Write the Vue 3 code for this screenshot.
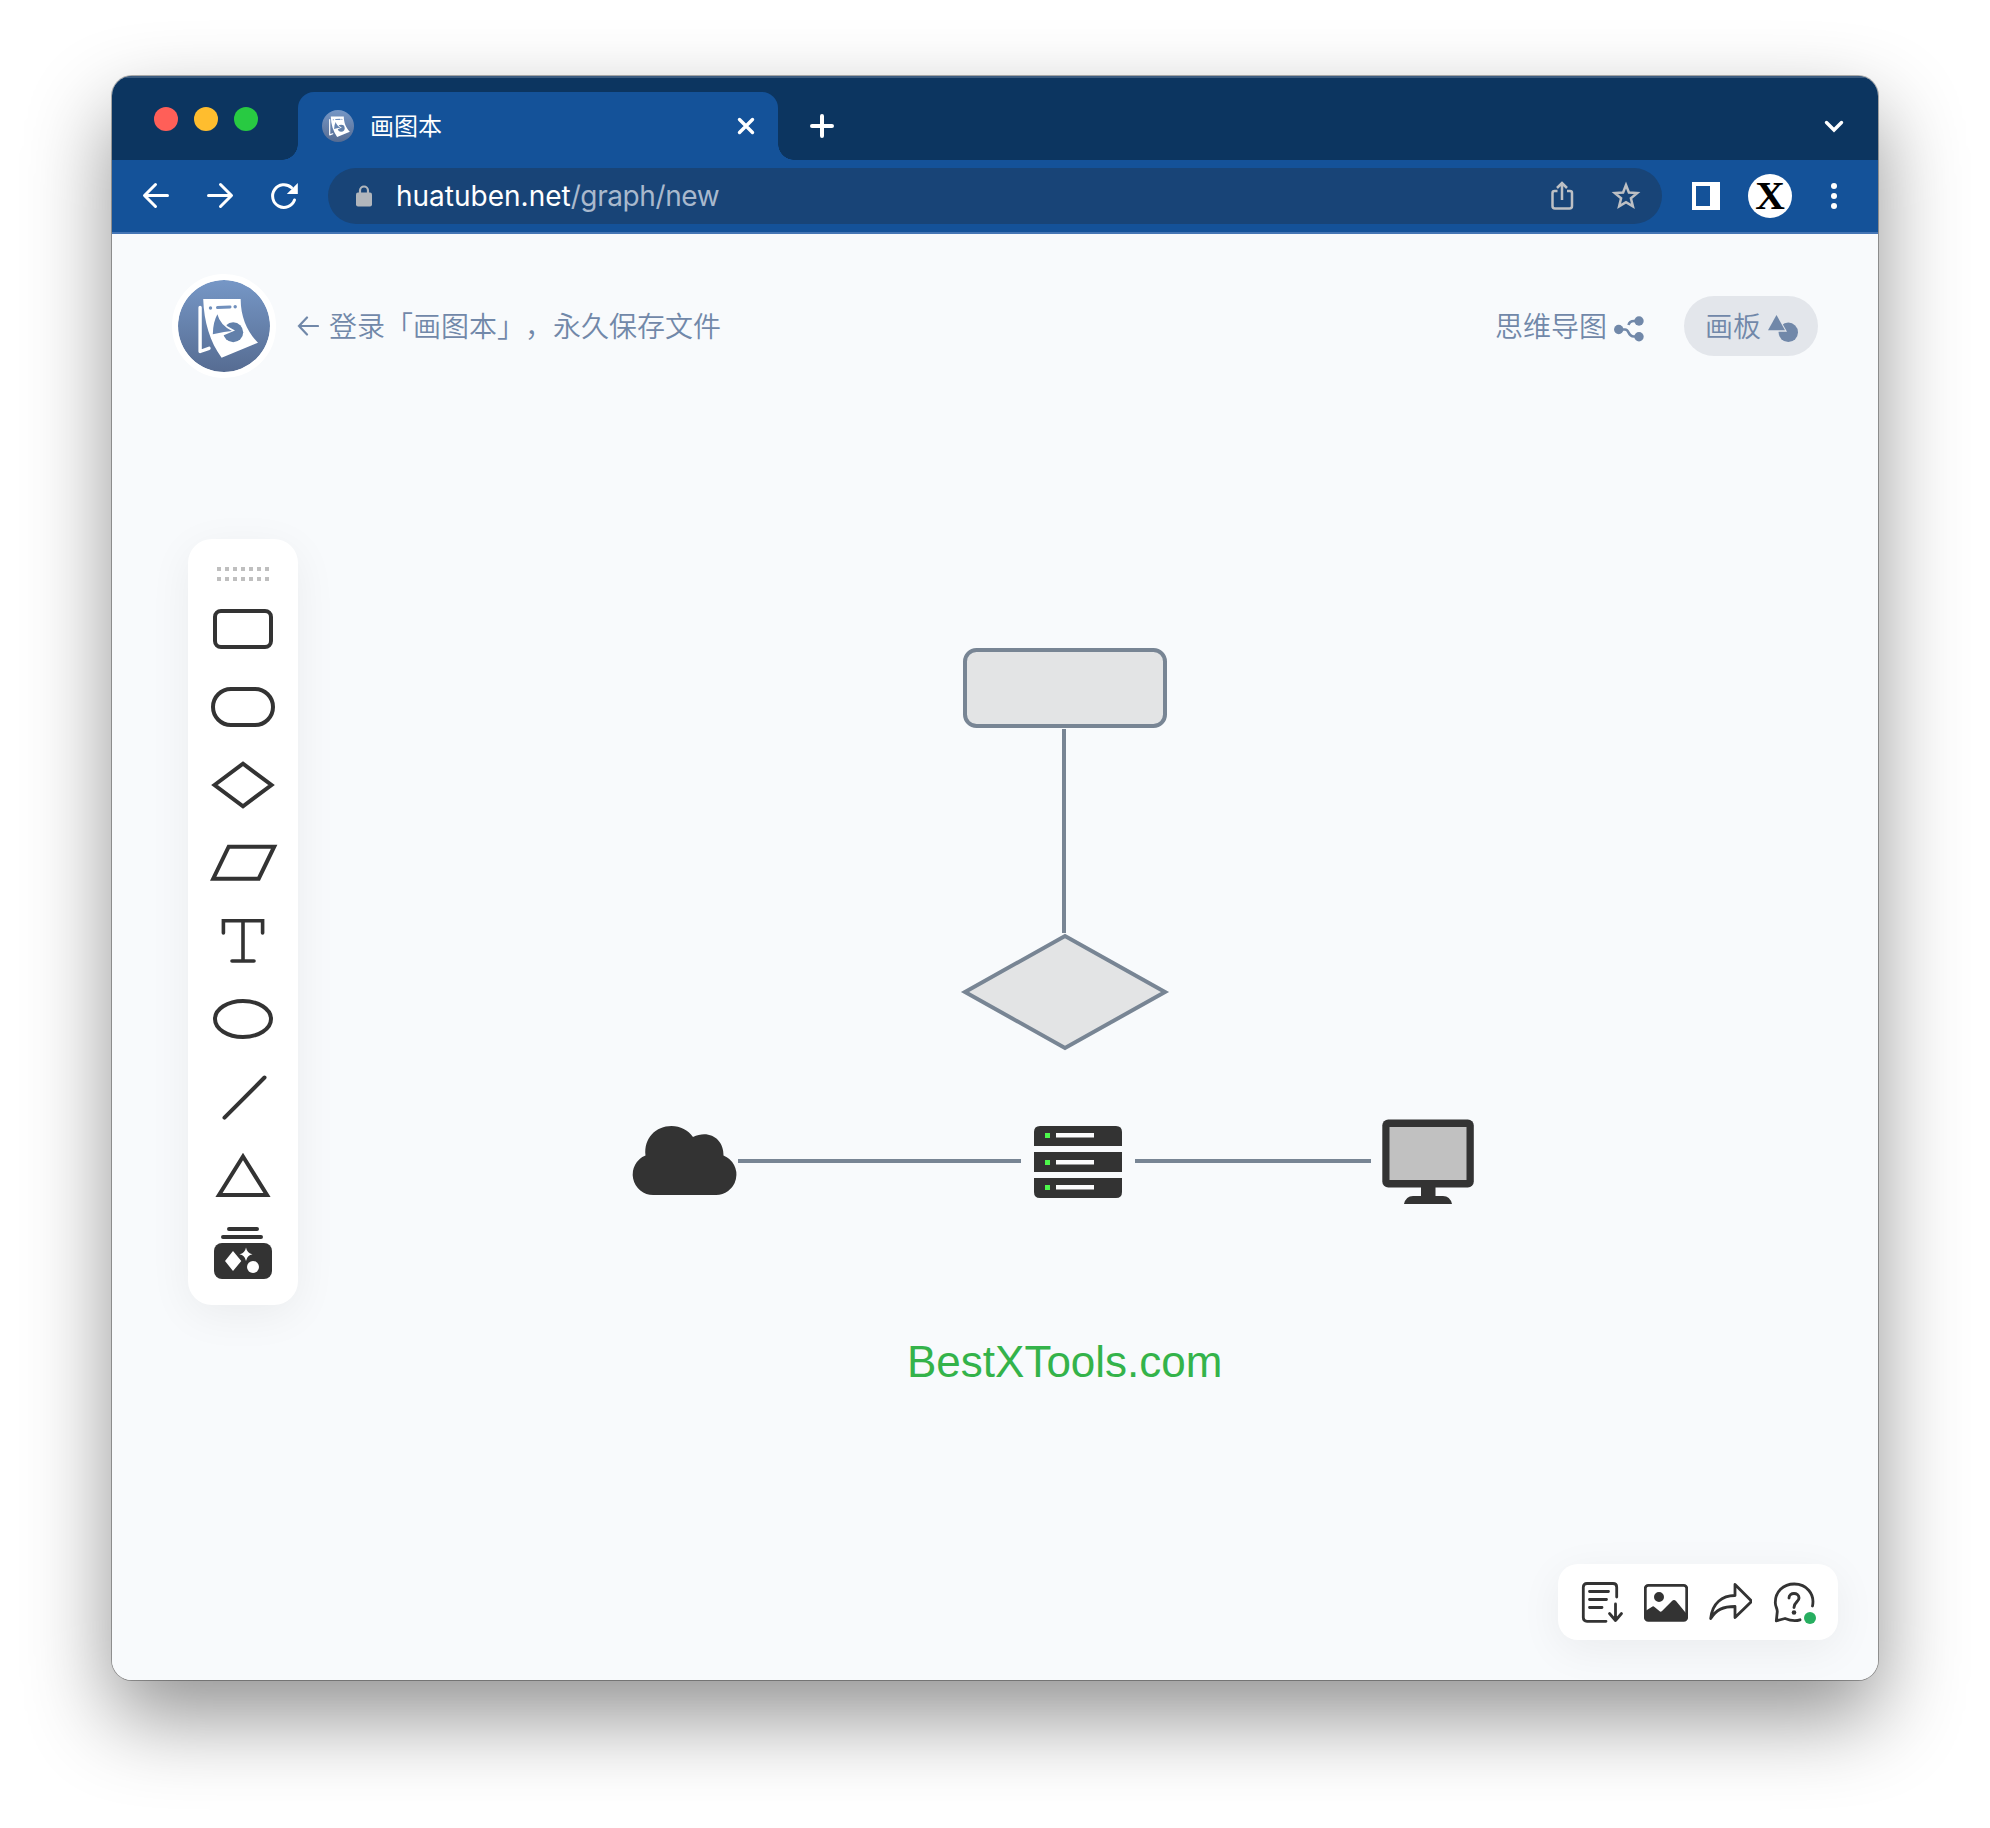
<script setup>
const tools = [
  { name: 'rect', body: '<rect x="27" y="21" width="56" height="36" rx="6"/>' },
  { name: 'round', body: '<rect x="25" y="21" width="60" height="36" rx="18"/>' },
  { name: 'diamond', body: '<path d="M26.5 39 55 17.7 83.500 39 55 60.300Z"/>' },
  { name: 'parallelogram', body: '<path d="M40.700 22.700H86.200L70.700 54.700H25.200Z"/>' },
  { name: 'text', body: '<g stroke-linecap="round"><path d="M35.400 31V18.700H74.600V31" stroke-width="3.600"/><path d="M55 19V59M44 59H66" stroke-width="3.600"/></g>' },
  { name: 'ellipse', body: '<ellipse cx="55" cy="39" rx="28" ry="18"/>' },
  { name: 'line', body: '<path d="M36.500 59.700 76.500 19.500" stroke-linecap="round"/>' },
  { name: 'triangle', body: '<path d="M55 20.500 79 59H31Z"/>' },
  {
    name: 'shapes',
    body:
      '<path d="M41 15H69M35 23H73" stroke-linecap="round"/>' +
      '<rect x="26" y="29" width="58" height="36" rx="8" fill="#333" stroke="none"/>' +
      '<path d="M45 37 53.300 47 45 57 37 47ZM58 33.500Q59 39.200 64.500 40.200 59 41.200 58 47 57 41.200 51.500 40.200 57 39.200 58 33.500Z" fill="#fff" stroke="none"/>' +
      '<circle cx="65" cy="53" r="6" fill="#fff" stroke="none"/>',
  },
]
const dots = Array.from({ length: 14 }, (_, i) => ({ x: (i % 7) * 8, y: i < 7 ? 0 : 10 }))
const servers = [{ y: 1126, m: 1133 }, { y: 1152, m: 1160 }, { y: 1178, m: 1185 }]
</script>

<template>
  <div class="desktop">
    <svg class="defs" width="0" height="0">
      <linearGradient id="logoFill" x1="0" y1="0" x2="0" y2="1">
        <stop offset="0" stop-color="#7697c6" />
        <stop offset="1" stop-color="#566c92" />
      </linearGradient>
      <symbol id="logo" viewBox="0 0 92 92">
        <circle cx="46" cy="46" r="46" fill="url(#logoFill)" />
        <path d="M22.100 27.500V71.500L31 68.300" fill="none" stroke="#fff" stroke-width="3.400" stroke-linecap="round" stroke-linejoin="round" />
        <path d="M25.200 19H62.700C62.500 36 69 52 80 62.700L43.600 77.700C32 62 26 42 25.200 19Z" fill="#fff" />
        <circle cx="32.500" cy="28" r="1.700" fill="#7190bd" />
        <circle cx="57.200" cy="26.700" r="1.700" fill="#7190bd" />
        <path d="M39.500 27.600 52 26.900" stroke="#7190bd" stroke-width="3" stroke-linecap="round" />
        <circle cx="55.200" cy="52.300" r="10" fill="#6280aa" />
        <path d="M39 31 49 46 57 50.500 44 56Z" fill="#fff" />
        <path d="M39.400 34.300Q42 45 54 51L46 52 34.800 54.300Q35 42 39.400 34.300Z" fill="#6684b0" />
      </symbol>
    </svg>

    <div class="window">
      <div class="tabstrip">
        <div class="lights"><i class="red"></i><i class="yellow"></i><i class="green"></i></div>
        <div class="tab">
          <svg class="favicon"><use href="#logo" /></svg>
          <span class="tab-title">画图本</span>
          <svg class="close" width="20" height="20" viewBox="0 0 20 20"><path d="M3.500 3.500 16.500 16.500M16.500 3.500 3.500 16.500" /></svg>
        </div>
        <svg class="plus" width="28" height="28" viewBox="0 0 28 28"><path d="M14 4V24M4 14H24" /></svg>
        <svg class="chevron" width="24" height="24" viewBox="0 0 24 24"><path d="M4.500 8.500 12 16 19.500 8.500" /></svg>
      </div>

      <div class="navbar">
        <svg class="nav-icon" width="32" height="32" viewBox="0 0 32 32"><path d="M27.500 15.500H5M15.500 4.500 4.500 15.500 15.500 26.500" /></svg>
        <svg class="nav-icon" width="32" height="32" viewBox="0 0 32 32"><path d="M4.500 15.500H27M16.500 4.500 27.500 15.500 16.500 26.500" /></svg>
        <svg class="nav-icon" width="32" height="32" viewBox="0 0 32 32">
          <path d="M26.500 20A11.300 11.300 0 1 1 23.500 7.700" /><path class="solid" d="M29.800 3V14H18.800Z" />
        </svg>
        <div class="address">
          <svg class="lock" width="16" height="22" viewBox="0 0 16 22">
            <path d="M4 9V5.500a4 4 0 0 1 8 0V9" fill="none" stroke="#b1b6bc" stroke-width="2.200" />
            <rect y="7.500" width="16" height="14" rx="2" fill="#b1b6bc" />
          </svg>
          <span class="url">huatuben.net<span class="path">/graph/new</span></span>
          <svg class="share" width="24" height="32" viewBox="0 0 24 32"><path d="M7.500 11H4.500Q2.500 11 2.500 13V26Q2.500 28.500 5 28.500H19.500Q22 28.500 22 26V13Q22 11 20 11H17M12 20V3.500M7 8 12 3 17 8" /></svg>
          <svg class="star" width="30" height="30" viewBox="0 0 30 30"><path d="M15 4 17.900 11.500 26.200 12.100 19.900 17.300 21.900 25.400 15 21.100 8.100 25.400 10.100 17.300 3.800 12.100 12.100 11.500Z" /></svg>
        </div>
        <svg class="panel-icon" width="28" height="28" viewBox="0 0 28 28"><path d="M0 0H28V28H0ZM4 4V24H18V4Z" fill="#fff" fill-rule="evenodd" /></svg>
        <div class="profile">X</div>
        <svg class="menu" width="6" height="28" viewBox="0 0 6 28" fill="#fff"><circle cx="3" cy="4" r="3" /><circle cx="3" cy="14" r="3" /><circle cx="3" cy="24" r="3" /></svg>
      </div>

      <div class="page">
        <svg class="board" width="1766" height="1446" viewBox="112 234 1766 1446">
          <g fill="#e3e4e5" stroke="#788594" stroke-width="4">
            <path d="M1064 729V933M738 1161H1021M1135 1161H1371" />
            <rect x="965" y="650" width="200" height="76" rx="11.500" />
            <path d="M965 992 1065 936 1165 992 1065 1048Z" />
          </g>
          <path fill="#333" d="M653.500 1195A20.500 20.500 0 0 1 645.500 1155.500C643.500 1138 656 1126 671.500 1126 680.500 1126 688 1130 693 1137 709 1129 724 1139 723.500 1155.500A20.500 20.500 0 0 1 714.500 1195Z" />
          <path fill="#333" d="M1034 1146V1132Q1034 1126 1040 1126H1116Q1122 1126 1122 1132V1146ZM1034 1152H1122V1172H1034ZM1034 1178H1122V1192Q1122 1198 1116 1198H1040Q1034 1198 1034 1192Z" />
          <g v-for="s in servers" :key="s.y">
            <rect x="1045" :y="s.m" width="5" height="5" fill="#4df84c" />
            <rect x="1056" :y="s.m" width="38" height="4.500" fill="#fbfbfd" />
          </g>
          <rect x="1382.300" y="1119.500" width="91.500" height="68" rx="6" fill="#333" />
          <rect x="1389.500" y="1127" width="77" height="53" fill="#c1c1c1" />
          <path fill="#333" d="M1421 1187H1435.500V1196H1443Q1450 1196 1452 1204H1404Q1406 1196 1413 1196H1421Z" />
          <text class="caption" x="907" y="1377">BestXTools.com</text>
        </svg>

        <header class="header">
          <svg class="logo"><use href="#logo" /></svg>
          <div class="login"><svg width="22" height="20" viewBox="0 0 22 20"><path d="M21 10H2M10 1.500 2 10 10 18.500" /></svg><span class="label">登录「画图本」，永久保存文件</span></div>
          <div class="mode">
            <span class="label">思维导图</span>
            <svg width="30" height="26" viewBox="0 0 30 26">
              <path d="M5 13.500H11C16 13.500 13 20.500 20 20.500H25M14.500 9Q15.500 5 20 5H25" fill="none" stroke="#7188a9" stroke-width="2.600" />
              <circle cx="4.700" cy="13.500" r="4.700" /><circle cx="25" cy="5" r="4.700" /><circle cx="25" cy="20.700" r="4.700" />
            </svg>
          </div>
          <div class="mode active">
            <span class="label">画板</span>
            <svg width="30" height="28" viewBox="0 0 30 28">
              <circle cx="20.300" cy="17.300" r="9.700" /><path d="M8.500-2 19 16.800H6L0 16Z" fill="#e3e6eb" /><path d="M8.500 0 17 15.300H0Z" />
            </svg>
          </div>
        </header>

        <aside class="toolbox">
          <svg class="grip" width="52" height="14" viewBox="0 0 52 14" fill="#bfbfbf"><rect v-for="d in dots" :key="`${d.x}-${d.y}`" :x="d.x" :y="d.y" width="4" height="4" /></svg>
          <svg v-for="t in tools" :key="t.name" class="tool" width="110" height="78" viewBox="0 0 110 78" v-html="t.body"></svg>
        </aside>

        <footer class="actions">
          <svg width="44" height="44" viewBox="0 0 44 44"><path d="M26 41.300H7Q3.300 41.300 3.300 37.600V7.200Q3.300 3.500 7 3.500H33Q36.700 3.500 36.700 7.200V17M9.500 11.500H28.500M9.500 19.500H26.500M9.500 27.500H22M35.500 24V40M29.500 33.500 35.500 40.500 41.500 33.500" /></svg>
          <svg width="44" height="44" viewBox="0 0 44 44"><rect x="1.300" y="5.300" width="41.400" height="35" rx="3" /><circle cx="15" cy="17" r="3.600" class="dark" /><path class="dark" d="M1.300 31 8.500 26.500Q9.500 26 10.500 27L16 31.500Q17 32 18 31L28 21Q30 19 32 21L42.700 34V38Q42.700 40.300 40 40.300H4Q1.300 40.300 1.300 38Z" stroke="none" /></svg>
          <svg width="44" height="44" viewBox="0 0 44 44"><path d="M2.700 38.500C4.200 23 14.200 15.500 27 15.500V4.500L43.700 21.300 27 37.500V26.500C15.200 26.500 8.200 29.500 2.700 38.500Z" /></svg>
          <svg width="44" height="44" viewBox="0 0 44 44">
            <path d="M40.500 26C43 14 34.500 4 22.300 4 11 4 3.300 12 3.300 22.500 3.300 27 5.300 28 5.300 31.500L4.300 40.800 13 38.500C18 40.500 23 41.500 28 39.800" />
            <path d="M17 18C17 12 27 12 27 18 27 22 22 22 22 27.500" stroke-width="2.900" /><circle cx="22" cy="32.500" r="2.300" class="dark" stroke="none" /><circle cx="38" cy="38" r="6" fill="#27ae60" stroke="none" />
          </svg>
        </footer>
      </div>
    </div>
  </div>
</template>

<style>
body {
  background: #fff;
}
</style>

<style scoped>
.desktop {
  box-sizing: border-box;
  width: 1990px;
  height: 1828px;
  padding: 76px 112px 148px;
  overflow: hidden;
  font-family: Inter, 'Noto Sans CJK SC', sans-serif;
}
.defs {
  position: absolute;
}
svg {
  display: block;
  flex: none;
}
.window {
  display: flex;
  flex-direction: column;
  height: 1604px;
  border-radius: 20px;
  overflow: hidden;
  box-shadow: 0 0 0 1px rgba(0, 0, 0, 0.3), 0 37px 84px rgba(0, 0, 0, 0.43);
}
.tabstrip {
  display: flex;
  align-items: center;
  box-sizing: border-box;
  height: 84px;
  padding: 16px 32px 0 42px;
  background: #0c3560;
  box-shadow: inset 0 2px #3b5c80;
}
.lights {
  display: flex;
  gap: 16px;
  width: 144px;
  margin-bottom: 14px;
}
.lights i {
  width: 24px;
  height: 24px;
  border-radius: 50%;
}
.red { background: #ff5f58; }
.yellow { background: #ffbd2e; }
.green { background: #28ca42; }
.tab {
  position: relative;
  display: flex;
  align-items: center;
  box-sizing: border-box;
  width: 480px;
  height: 68px;
  padding: 0 22px 0 24px;
  border-radius: 16px 16px 0 0;
  background: #145299;
  color: #fff;
}
.tab::before,
.tab::after {
  content: '';
  position: absolute;
  bottom: 0;
  width: 16px;
  height: 16px;
}
.tab::before {
  left: -16px;
  background: radial-gradient(circle at 0 0, transparent 15.500px, #145299 16px);
}
.tab::after {
  right: -16px;
  background: radial-gradient(circle at 100% 0, transparent 15.500px, #145299 16px);
}
.favicon {
  width: 32px;
  height: 32px;
}
.tab-title {
  flex: 1;
  margin: 0 0 4px 16px;
  font-size: 24px;
}
.close path,
.plus path,
.chevron path {
  fill: none;
  stroke: #fff;
  stroke-width: 3.4;
  stroke-linecap: round;
}
.plus {
  margin-left: 30px;
}
.plus path {
  stroke-width: 4;
}
.chevron {
  margin-left: auto;
}
.navbar {
  display: flex;
  align-items: center;
  box-sizing: border-box;
  height: 74px;
  padding: 0 41px 0 28px;
  background: #145299;
  border-bottom: 2px solid #4576b5;
}
.nav-icon {
  margin-right: 32px;
}
.nav-icon path {
  fill: none;
  stroke: #fff;
  stroke-width: 3;
  stroke-linecap: round;
  stroke-linejoin: round;
}
.nav-icon .solid {
  fill: #fff;
  stroke: none;
}
.address {
  display: flex;
  align-items: center;
  box-sizing: border-box;
  width: 1334px;
  height: 56px;
  margin-left: -4px;
  padding: 0 21px 0 28px;
  border-radius: 28px;
  background: #184477;
}
.url {
  flex: 1;
  margin-left: 24px;
  color: #fff;
  font: 28px Inter, sans-serif;
}
.path {
  color: #a9b9cd;
  letter-spacing: -0.4px;
}
.share path,
.star path {
  fill: none;
  stroke: #bdc0c4;
  stroke-width: 2.5;
}
.share {
  margin-right: 37px;
}
.panel-icon {
  margin-left: 30px;
}
.profile {
  width: 44px;
  height: 44px;
  margin-left: 28px;
  border-radius: 50%;
  background: #fff;
  color: #000;
  text-align: center;
  font: bold 41px/43px 'Liberation Serif', serif;
}
.menu {
  margin-left: auto;
}
.page {
  position: relative;
  display: flex;
  flex-direction: column;
  flex: 1;
  background: #f8fafc;
}
.board {
  position: absolute;
  inset: 0;
}
.caption {
  fill: #34b34a;
  font: 44px 'Liberation Sans', sans-serif;
}
.header {
  position: relative;
  display: flex;
  align-items: center;
  height: 104px;
  margin: 40px 60px 0;
  color: #7188a9;
  font-size: 28px;
  font-weight: 350;
}
.label {
  margin-bottom: 2px;
  text-spacing-trim: space-all;
}
.logo {
  width: 92px;
  height: 92px;
  border: 6px solid #fff;
  border-radius: 50%;
}
.login {
  display: flex;
  align-items: center;
  gap: 10px;
  margin: 0 auto 0 21px;
}
.login path {
  fill: none;
  stroke: #7188a9;
  stroke-width: 2.2;
  stroke-linecap: round;
}
.mode {
  display: flex;
  align-items: center;
  gap: 7px;
  margin-right: 40px;
}
.mode svg {
  margin-top: 5px;
  fill: #7188a9;
}
.mode.active {
  box-sizing: border-box;
  width: 134px;
  height: 60px;
  margin-right: 0;
  padding-left: 21px;
  border-radius: 30px;
  background: #e3e6eb;
}
.toolbox {
  position: relative;
  display: flex;
  flex-direction: column;
  align-items: center;
  width: 110px;
  height: 766px;
  margin: 161px 0 0 76px;
  border-radius: 24px;
  background: #fff;
  box-shadow: 0 10px 44px rgba(0, 0, 0, 0.06);
}
.grip {
  margin: 28px 0 9px;
}
.tool {
  fill: none;
  stroke: #333;
  stroke-width: 4;
}
.actions {
  position: relative;
  display: flex;
  align-items: center;
  gap: 20px;
  box-sizing: border-box;
  width: 280px;
  height: 76px;
  margin: auto 40px 40px auto;
  padding-left: 22px;
  border-radius: 20px;
  background: #fff;
  box-shadow: 0 10px 44px rgba(0, 0, 0, 0.06);
}
.actions svg {
  fill: none;
  stroke: #333;
  stroke-width: 2.8;
  stroke-linecap: round;
  stroke-linejoin: round;
}
.actions .dark {
  fill: #333;
}
</style>
